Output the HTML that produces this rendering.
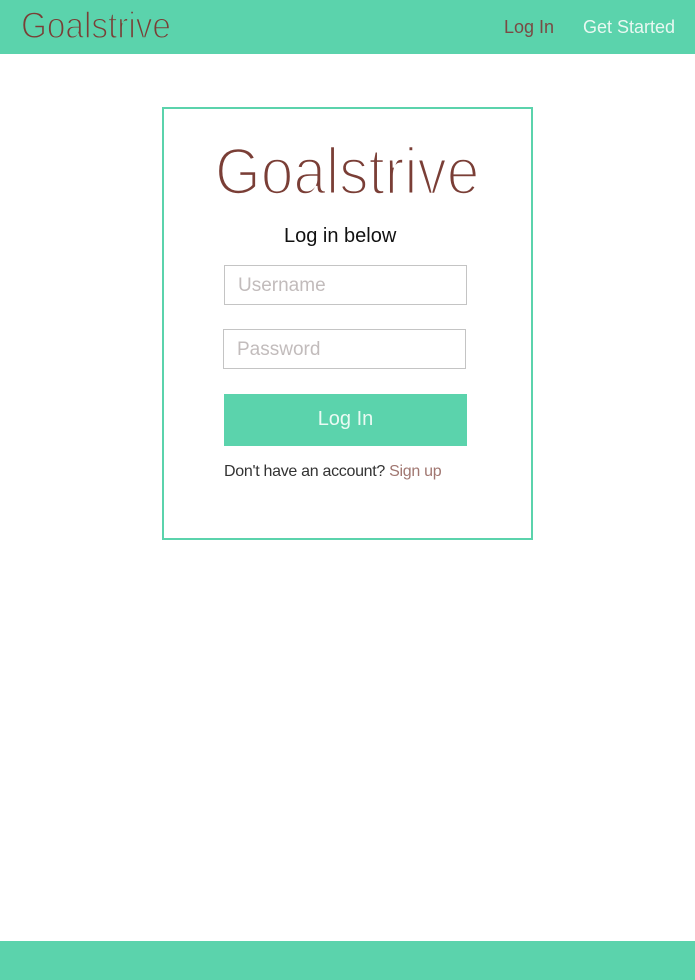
<!DOCTYPE html>
<html><head><meta charset="utf-8"><style>
*{margin:0;padding:0;box-sizing:border-box}
body{width:695px;height:980px;position:relative;background:#fff;font-family:"Liberation Sans",sans-serif;overflow:hidden}
.hdr{position:absolute;left:0;top:0;width:695px;height:54px;background:#5bd3ac}
.hlogo{position:absolute;left:21px;top:5px;font-size:37px;color:#7a3e36;transform:scaleX(.9);transform-origin:left top;-webkit-text-stroke:1.4px #5bd3ac}
.nav{position:absolute;top:17px;font-size:18px}
.box{position:absolute;left:162px;top:107px;width:371px;height:433px;border:2px solid #5bd3ac}
.logo{position:absolute;left:215px;top:133px;font-size:66px;color:#7a3e36;transform:scaleX(.89);transform-origin:left top;white-space:nowrap;-webkit-text-stroke:2.6px #fff}
.sub{position:absolute;left:284px;top:225px;font-size:20px;color:#111}
.in{position:absolute;width:243px;height:40px;border:1px solid #c4c4c4;font-size:19px;color:#c2bcbc;padding:9px 0 0 13px}
.btn{position:absolute;left:224px;top:394px;width:243px;height:52px;background:#5bd3ac;color:#eafaf3;font-size:20px;text-align:center;line-height:51px}
.acc{position:absolute;left:224px;top:463px;font-size:16px;color:#333;white-space:nowrap;letter-spacing:-0.3px}
.foot{position:absolute;left:0;top:941px;width:695px;height:39px;background:#5bd3ac}
</style></head><body>
<div class="hdr">
<div class="hlogo">Goalstrive</div>
<div class="nav" style="left:504px;color:#7a4a44">Log In</div>
<div class="nav" style="left:583px;color:#e8f8f1">Get Started</div>
</div>
<div class="box"></div>
<div class="logo">Goalstrive</div>
<div class="sub">Log in below</div>
<div class="in" style="left:224px;top:265px">Username</div>
<div class="in" style="left:223px;top:329px">Password</div>
<div class="btn">Log In</div>
<div class="acc">Don't have an account? <span style="color:#a07670">Sign up</span></div>
<div class="foot"></div>
</body></html>
